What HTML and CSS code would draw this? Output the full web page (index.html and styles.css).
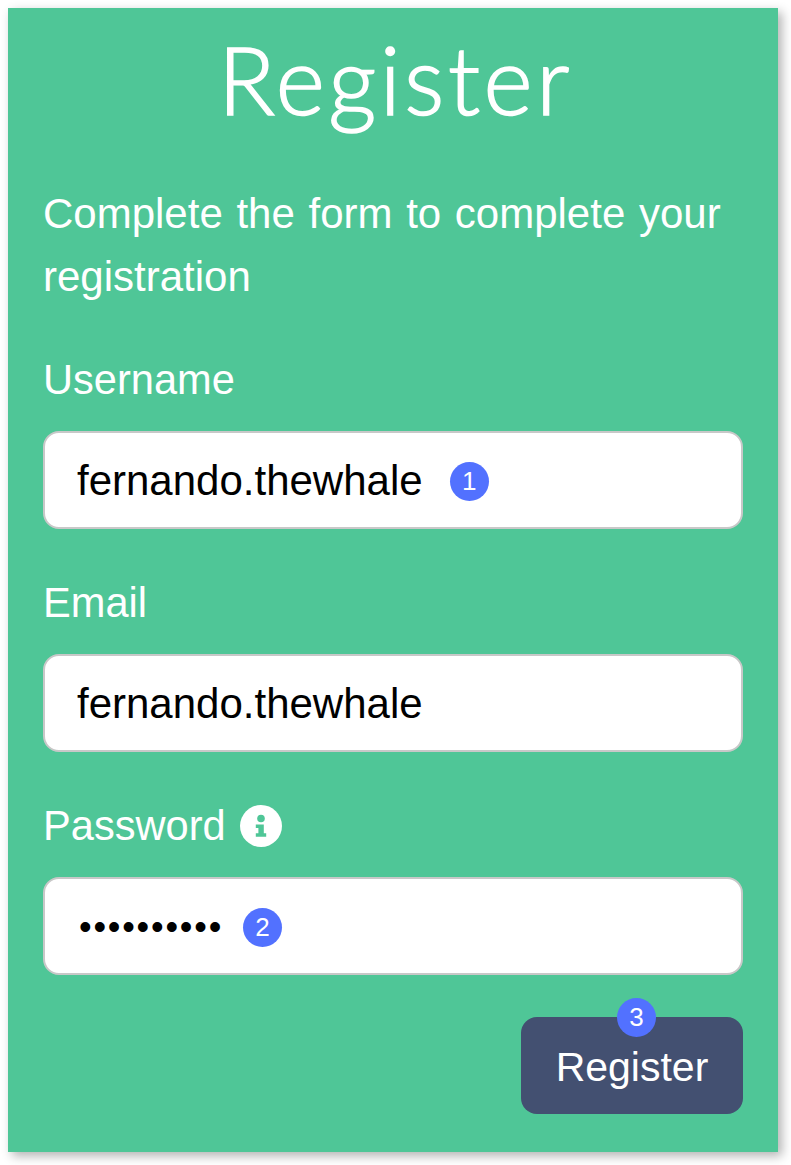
FILE: index.html
```html
<!DOCTYPE html>
<html lang="en">
<head>
<meta charset="utf-8">
<title>Register</title>
<link rel="stylesheet" href="styles.css">
</head>
<body>
<main class="card">
  <h1 class="title">Register</h1>
  <p class="intro">Complete the form to complete your registration</p>
  <form class="form">
    <div class="group">
      <div class="label">Username</div>
      <div class="field"><span>fernando.thewhale</span><span class="badge">1</span></div>
    </div>
    <div class="group">
      <div class="label">Email</div>
      <div class="field"><span>fernando.thewhale</span></div>
    </div>
    <div class="group">
      <div class="label">Password
        <svg class="info" viewBox="0 0 42 42" aria-hidden="true">
          <circle cx="21" cy="21" r="21" fill="#fff"/>
          <circle cx="21" cy="13.5" r="3.8" fill="#4fc697"/>
          <path d="M15.8 19.5h8v8.7h2.4v3.6H15.8v-3.6h2.6v-5.1h-2.6z" fill="#4fc697"/>
        </svg>
      </div>
      <div class="field"><span class="dots">••••••••••</span><span class="badge badge-pw">2</span></div>
    </div>
    <div class="actions">
      <button class="submit" type="button">Register<span class="badge badge-top">3</span></button>
    </div>
  </form>
</main>
</body>
</html>
```
FILE: styles.css
```css
html, body { background: #fff; }
body {
  box-sizing: border-box;
  min-height: 100vh;
  margin: 0;
  padding: 8px;
  font-family: "Liberation Sans", Arial, sans-serif;
}
.card {
  width: 770px;
  height: 1144px;
  box-sizing: border-box;
  padding: 0 35px;
  background: #4fc697;
  color: #fff;
  box-shadow: 4px 4px 10px rgba(0, 0, 0, .3);
}
.title {
  margin: 0;
  padding: 13px 0 0 5px;
  text-align: center;
  font-family: Lato, sans-serif;
  font-weight: 300;
  font-size: 94px;
  line-height: 116px;
  letter-spacing: 3.6px;
  -webkit-text-stroke: 1.6px #fff;
}
.intro {
  margin: 45px 0 0;
  font-size: 42px;
  line-height: 63px;
  word-spacing: 2px;
}
.form { display: flex; flex-direction: column; gap: 42px; margin-top: 42px; }
.group + .group { margin-top: 2px; }
.label {
  display: flex;
  align-items: center;
  gap: 14px;
  font-size: 41.6px;
  line-height: 60px;
  margin-bottom: 21px;
}
.info { width: 42px; height: 42px; }
.field {
  display: flex;
  align-items: center;
  gap: 27px;
  box-sizing: border-box;
  height: 98px;
  padding: 2px 32px 0;
  background: #fff;
  border: 2px solid #c8c8c8;
  border-radius: 16px;
  color: #000;
  font-size: 42px;
}
.dots { margin-left: 2px; font-size: 36px; letter-spacing: 1.8px; }
.badge {
  display: flex;
  align-items: center;
  justify-content: center;
  width: 39px;
  height: 39px;
  border-radius: 50%;
  background: #5271ff;
  color: #fff;
  font-size: 26px;
}
.badge-pw { margin-left: -7px; }
.submit {
  position: relative;
  width: 222px;
  height: 97px;
  padding: 3px 0 0;
  border: 0;
  border-radius: 16px;
  background: #435071;
  color: #fff;
  font: 41px "Liberation Sans", Arial, sans-serif;
}
.actions { display: flex; justify-content: flex-end; }
.badge-top { position: absolute; top: -19px; left: 96px; }
```
